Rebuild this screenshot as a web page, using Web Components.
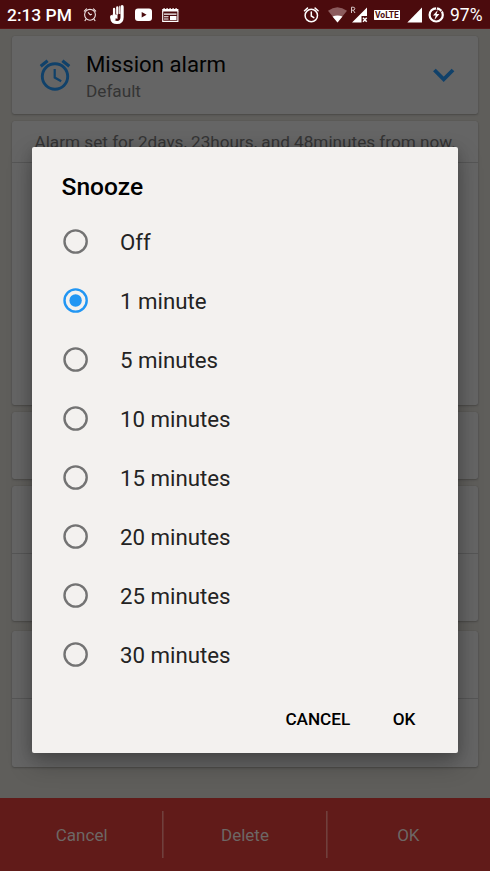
<!DOCTYPE html>
<html lang="en">
<head>
<meta charset="utf-8">
<title>Alarm – Snooze</title>
<style>
html,body{margin:0;height:100%;overflow:hidden;background:#5f5e5b}
body{font-family:Roboto,"Noto Sans",sans-serif}
</style>
</head>
<body>
<alarm-screen></alarm-screen>
<script>
const define = (name, html) => customElements.define(name, class extends HTMLElement {
  constructor() {
    super();
    this.attachShadow({ mode: 'open' }).innerHTML = typeof html === 'function' ? html(this) : html;
  }
});

define('status-bar', `
<style>
:host{display:flex;justify-content:space-between;height:28px;background:#4b0b0d;color:#fff;border-bottom:1px solid #591416;box-sizing:content-box}
.g{display:flex;height:28px}
svg{display:block;height:28px;flex:none}
span{font-size:17.4px;line-height:30px;white-space:nowrap}
.time{font-weight:500;width:76px;padding-left:7px;box-sizing:border-box}
.pct{width:40px;font-size:17.5px}
</style>
<div class="g">
  <span class="time">2:13 PM</span>
  <svg width="34" viewBox="76 0 34 28" fill="none" stroke="#f0e6e6" stroke-width="1.1" stroke-linecap="round"><circle cx="90" cy="14.8" r="5.4"/><path d="M84.3 11.2l2.2-2.3M95.7 11.2l-2.2-2.3M86 19.2l-1 1.4M94 19.2l1 1.4M88.3 12.6l2 2.3M90.3 14.8l1.2-.5"/></svg>
  <svg width="20" viewBox="110 0 20 28"><path d="M111.700 16.500V17.500q.5 5 5.300 5 5.100 0 5.100-5.300V6.700" fill="none" stroke="#fff" stroke-width="3.200" stroke-linecap="round"/><path d="M114.100 16V9M117.300 13.500V7.500" stroke="#fff" stroke-width="2.300" stroke-linecap="round"/><path d="M112.500 14.500h5v5.500h-5z" fill="#fff"/><path d="M120 5.500q-.8 0-.8 1.500v7h1.200z" fill="#fff"/><path d="M119.300 14.500q-.1 3-.8 4.500-1.600 1.500-2.800-.4" fill="none" stroke="#4b0b0d" stroke-width="1.400"/></svg>
  <svg width="26" viewBox="130 0 26 28"><rect x="135" y="8.500" width="17" height="12.400" rx="3" fill="#fff"/><path d="M141.700 11.900v5.500l4.900-2.750z" fill="#4b0b0d"/></svg>
  <svg width="24" viewBox="156 0 24 28"><path d="M162.700 11v10.400h15.200V11" fill="none" stroke="#fff" stroke-width="1.100"/><path fill="#fff" d="M162.200 9h16.200v2.500h-16.200zM163.500 8h1.200v1h-1.200zM166.500 8h1.200v1h-1.200zM169.500 8h1.200v1h-1.200zM172.500 8h1.200v1h-1.200zM175.500 8h1.200v1h-1.200zM164 13.500h12.500v1.300H164zM164 16.300h4.500v1H164zM164 18.600h4.500v1H164zM170 16h6.500v4h-6.500z"/></svg>
</div>
<div class="g">
  <svg width="26" viewBox="300 0 26 28" fill="none" stroke="#fff" stroke-width="1.500" stroke-linecap="round"><circle cx="311.300" cy="15.500" r="6.200"/><path d="M304.500 10.800l3-2.700M318.100 10.800l-3-2.700M311.300 12v4l2.500 1.600"/></svg>
  <svg width="23" viewBox="326 0 23 28"><path d="M328 10.800q9.400-7 19 0L337.500 22.500z" fill="#8b5b5d"/><path d="M332.500 16.500q5-2.200 10 0L337.500 22.500z" fill="#fff"/></svg>
  <svg width="20" viewBox="349 0 20 28"><path d="M351.500 13V7.200h1.600q1.700 0 1.700 1.500t-1.700 1.500h-1.600M353.200 10.200l1.800 2.800" stroke="#d6c6c6" fill="none"/><path d="M367 7.500V16h-5.500v6.500h-9.500z" fill="#fff"/><path d="M363 17.700l3.700 4M366.700 17.700l-3.700 4" stroke="#fff" stroke-width="1.500"/></svg>
  <svg width="36" viewBox="369 0 36 28"><rect x="374" y="9.900" width="26" height="10" rx=".6" fill="#fff"/><text x="375" y="18.100" font-family="Roboto,sans-serif" font-size="9" font-weight="700" textLength="23.800" lengthAdjust="spacingAndGlyphs" fill="#4b0b0d">VoLTE</text></svg>
  <svg width="20" viewBox="405 0 20 28"><path d="M422 7.500v14.900h-14.700z" fill="#fff"/></svg>
  <svg width="25" viewBox="425 0 25 28"><circle cx="436.200" cy="14.900" r="6.600" fill="none" stroke="#fff" stroke-width="2.200"/><path d="M436.500 7v2.500M442.800 10.500l-1.800 1" stroke="#4b0b0d" stroke-width=".9"/><path d="M437.800 10l-4.800 5.600h2.700l-1.300 4.400 5-6h-2.800z" fill="#fff"/></svg>
  <span class="pct">97%</span>
</div>`);

define('alarm-icon', `
<style>:host{display:block;width:32px;height:32px}svg{display:block}</style>
<svg width="32" height="32" fill="none" stroke="#10416a" stroke-width="2.900"><circle cx="16" cy="17.500" r="12.700"/><path d="M15.700 10V18.500l6.500 3.700" stroke-width="2.200"/><path d="M1.700 7.300L8.600 1.800M30.300 7.300l-6.900-5.500" stroke-width="3.200"/></svg>`);

define('setting-card', `
<style>
:host{display:flex;flex-direction:column;box-sizing:border-box;background:#656565;border-radius:2.500px;box-shadow:0 1px 2px rgba(0,0,0,.22),0 0 1px rgba(0,0,0,.12);overflow:hidden}
</style><slot></slot>`);

define('mission-row', `
<style>
:host{display:flex;height:78px;align-items:center}
alarm-icon{margin:0 15px 0 27px}
.t{flex:1;padding-top:3px}
.a{font-size:22.200px;line-height:28px;color:#020202}
.b{font-size:17.2px;line-height:26px;color:#343434}
svg{display:block;margin-right:22px}
</style>
<alarm-icon></alarm-icon>
<div class="t"><div class="a"><slot name="title"></slot></div><div class="b"><slot name="sub"></slot></div></div>
<svg width="24" height="16" fill="none" stroke="#10416a" stroke-width="3.800"><path d="M2.400 3l9.300 9.400L21 3"/></svg>`);

define('action-bar', `
<style>
:host{display:grid;grid-template-columns:repeat(3,1fr);height:73.500px;background:#611b19;color:#6d6765;font-size:17px;align-items:center;text-align:center}
div{height:47px;line-height:48px;box-sizing:border-box}
div:first-child{padding-right:1.500px}
div+div{box-shadow:-1px 0 #70403c,inset .6px 0 #70403c}
</style><div>Cancel</div><div>Delete</div><div>OK</div>`);

define('radio-option', `
<style>
:host{display:flex;align-items:center;height:59px;gap:32px;font-size:22.250px;color:#232323}
svg{display:block;flex:none;fill:none;stroke:#737373;stroke-width:2.400}
.dot{display:none;fill:#2196f3;stroke:none}
:host([checked]) svg{stroke:#2196f3}
:host([checked]) .dot{display:block}
span{line-height:28px}
</style><svg width="25" height="25"><circle cx="12.600" cy="12.500" r="11.100"/><circle class="dot" cx="12.600" cy="12.500" r="6.200"/></svg><span><slot></slot></span>`);

define('snooze-dialog', `
<style>
:host{display:flex;flex-direction:column;width:426.300px;height:606px;box-sizing:border-box;padding:25px 31px 0;background:#f3f1ef;border-radius:2px;box-shadow:0 10px 24px rgba(0,0,0,.28),0 2px 12px rgba(0,0,0,.15)}
h1{margin:0 0 0 -1.500px;font-size:24.600px;font-weight:500;line-height:30px;height:40px;color:#000}
.o{display:flex;flex-direction:column}
footer{display:flex;justify-content:flex-end;gap:42.500px;font-size:17.200px;letter-spacing:-.05px;font-weight:500;line-height:22px;color:#000;padding:24px 12px 0 0}
</style>
<h1>Snooze</h1>
<div class="o"><radio-option>Off</radio-option><radio-option checked>1 minute</radio-option><radio-option>5 minutes</radio-option><radio-option>10 minutes</radio-option><radio-option>15 minutes</radio-option><radio-option>20 minutes</radio-option><radio-option>25 minutes</radio-option><radio-option>30 minutes</radio-option></div>
<footer><span>CANCEL</span><span>OK</span></footer>`);

define('alarm-screen', `
<style>
:host{display:flex;flex-direction:column;position:relative;width:490px;height:871px;background:#5f5e5b;overflow:hidden}
main{flex:1;min-height:0;padding:7px 12px 0;display:flex;flex-direction:column;gap:7px}
setting-card{flex:none}
.info{height:42px;box-sizing:border-box;border-bottom:1px solid #565656;padding-left:22.500px;font-size:17.160px;line-height:42px;color:#343434;white-space:nowrap}
.half{height:67px;border-bottom:1px solid #565656}
snooze-dialog{position:absolute;left:32px;top:147px}
</style>
<status-bar></status-bar>
<main>
<setting-card><mission-row><span slot="title">Mission alarm</span><span slot="sub">Default</span></mission-row></setting-card>
<setting-card style="height:284px"><div class="info">Alarm set for 2days, 23hours, and 48minutes from now.</div></setting-card>
<setting-card style="height:67px"></setting-card>
<setting-card style="height:135px"><div class="half"></div></setting-card>
<setting-card style="height:136px;margin-top:3px"><div class="half"></div></setting-card>
</main>
<action-bar></action-bar>
<snooze-dialog></snooze-dialog>`);
</script>
</body>
</html>
